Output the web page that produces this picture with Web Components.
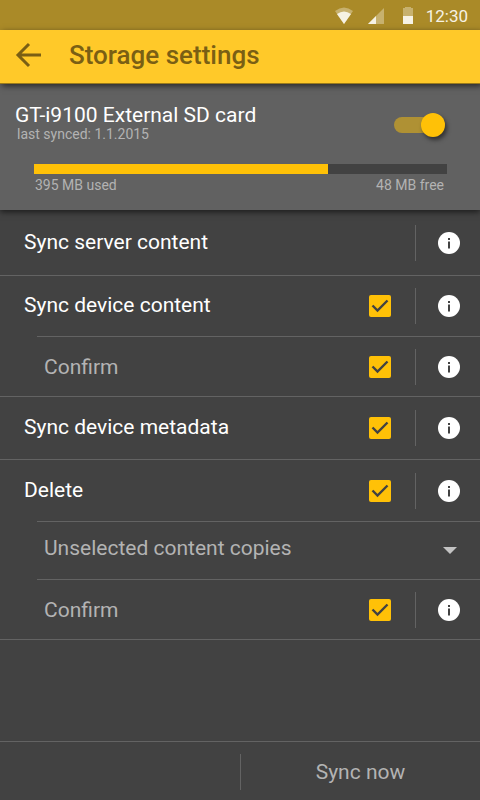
<!DOCTYPE html>
<html lang="en">
<head>
<meta charset="utf-8">
<meta name="viewport" content="width=device-width, initial-scale=1">
<title>Storage settings</title>
<style>
  html, body { height: 100%; margin: 0; }
  body {
    --amber: #ffc107;
    --surface: #424242;
    --raised: #616161;
    --line: #636363;
    --muted: #b3b3b3;
    background: var(--surface);
    color: #fff;
    font-family: Roboto, "Liberation Sans", sans-serif;
  }
</style>
</head>
<body>
<storage-screen></storage-screen>

<script>
const define = (name, html, setup) => {
  const template = document.createElement('template');
  template.innerHTML = html;
  customElements.define(name, class extends HTMLElement {
    constructor() {
      super();
      this.attachShadow({ mode: 'open' }).append(template.content.cloneNode(true));
    }
    connectedCallback() { if (setup) setup(this, this.shadowRoot); }
  });
};

define('status-bar', `
<style>
  :host { display: flex; justify-content: flex-end; align-items: center; height: 30px; padding: 2px 12px 0 0; box-sizing: border-box; background: #aa8a28; color: #f6f2e4; }
  svg { display: block; height: 18px; }
  .wifi { width: 18px; margin-right: 15px; }
  .cell { width: 16px; margin-right: 19px; }
  .battery { width: 10px; margin-right: 13px; }
  time { font-size: 17px; line-height: 24px; }
</style>
<svg class="wifi" viewBox="0 0 18 18" aria-label="Wi-Fi"><path d="M0 4Q9-3 18 4L9 17z" fill="#c7b16e"/><path d="M2 7Q9 2 16 7L9 17z" fill="#f6f2e4"/></svg>
<svg class="cell" viewBox="0 0 16 18" aria-label="Signal"><path d="M16 1v16H0z" fill="#c7b16e"/><path d="M8 9v8H0z" fill="#f6f2e4"/></svg>
<svg class="battery" viewBox="0 0 10 18" aria-label="Battery"><path d="M0 1h2V0h6v1h2v16H0z" fill="#c7b16e"/><path d="M0 9h10v8H0z" fill="#f6f2e4"/></svg>
<time>12:30</time>`);

define('app-header', `
<style>
  :host { display: flex; align-items: center; gap: 27px; height: 54px; padding: 0 14px 3px; box-sizing: border-box; background: #ffc929; border-bottom: 1px solid #9a7a1c; color: #7a5f14; position: relative; z-index: 2; box-shadow: 2px 2px 6px rgba(0,0,0,.6); }
  button { display: block; width: 28px; height: 28px; padding: 0; border: 0; background: none; color: inherit; }
  svg { display: block; }
  h1 { margin: 0; font-size: 26px; line-height: 32px; font-weight: 500; }
</style>
<button aria-label="Back"><svg width="28" height="28" viewBox="0 0 28 28" fill="none" stroke="currentColor" stroke-width="3"><path d="M27 14H4M15 3L4 14l11 11"/></svg></button>
<h1><slot></slot></h1>`);

define('toggle-switch', `
<style>
  :host { display: block; }
  input { appearance: none; display: flex; justify-content: flex-end; align-items: center; width: 51px; height: 16px; margin: 0; border-radius: 8px; background: #af9134; }
  input::before { content: ""; width: 24px; height: 24px; flex: none; border-radius: 50%; background: var(--amber); box-shadow: 2px 3px 4px rgba(0,0,0,.5); }
</style>
<input type="checkbox" role="switch" checked aria-label="Sync this storage">`);

define('storage-card', `
<style>
  :host { display: block; padding: 19px 33px 16px 15px; background: var(--raised); position: relative; z-index: 1; box-shadow: 0 2px 6px rgba(0,0,0,.6); }
  .top { display: flex; justify-content: space-between; align-items: center; }
  toggle-switch { margin: 6px 2px 0 0; }
  h2 { margin: 0; font-size: 21px; line-height: 24px; font-weight: 400; }
  p { margin: 0 0 0 2px; }
  p, label, output { font-size: 14px; color: var(--muted); }
  p { line-height: 14px; }
  label, output { line-height: 18px; }
  .usage { display: grid; grid-template-columns: 1fr auto; row-gap: 2px; margin: 23px 0 0 19px; }
  progress { appearance: none; grid-column: 1 / -1; display: block; width: 100%; height: 10px; border: 0; background: var(--surface); }
  progress::-webkit-progress-bar { background: var(--surface); }
  progress::-webkit-progress-value { background: var(--amber); }
  output { padding-right: 3px; }
  label { padding-left: 1px; }
</style>
<div class="top">
  <div><h2>GT-i9100 External SD card</h2><p>last synced: 1.1.2015</p></div>
  <toggle-switch></toggle-switch>
</div>
<div class="usage">
  <progress id="used" max="413" value="294"></progress>
  <label for="used">395 MB used</label><output>48 MB free</output>
</div>`);

define('setting-row', `
<style>
  :host { display: flex; align-items: center; box-sizing: border-box; height: 60px; padding: 0 20px 0 24px; border-bottom: 1px solid var(--line); }
  :host([tall]) { height: 63px; }
  :host([first]) { height: 66px; }
  :host([sub]) { padding-left: 7px; color: var(--muted); }
  label { flex: 1; font-size: 21px; line-height: 26px; padding-bottom: 2px; }
  :host([sub]) label { padding-bottom: 0; }
  input { appearance: none; width: 22px; height: 22px; margin: 0 24px 0 0; border-radius: 2px; background: var(--amber) }
  .tick { display: grid; }
  .tick > * { grid-area: 1 / 1; }
  .tick svg { pointer-events: none; }
  :host([plain]) .tick { display: none; }
  .info { display: flex; align-items: center; height: 36px; padding: 0 0 0 22px; border: 0; border-left: 1px solid var(--line); background: none; }
  svg { display: block; }
</style>
<label for="box"><slot></slot></label>
<div class="tick"><input type="checkbox" id="box" checked><svg width="22" height="22" viewBox="0 0 22 22" fill="none" stroke="#424242" stroke-width="2.4"><path d="M3.500 10.500L8.500 15.500L18.500 5.500"/></svg></div>
<button class="info" aria-label="Information"><svg width="22" height="22" viewBox="0 0 22 22"><circle cx="11" cy="11" r="11" fill="#fff"/><path d="M10 6h2v2h-2zM10 9.500h2v7h-2z" fill="#424242"/></svg></button>`,
(host, root) => root.querySelector('input').setAttribute('aria-label', host.textContent));

define('select-row', `
<style>
  :host { display: grid; align-items: center; box-sizing: border-box; height: 58px; border-bottom: 1px solid var(--line); color: var(--muted); }
  select, svg { grid-area: 1 / 1; }
  select { appearance: none; width: 100%; height: 26px; padding: 0 48px 0 7px; margin: 0 0 6px; border: 0; background: none; color: inherit; font: 21px/26px Roboto, "Liberation Sans", sans-serif; }
  svg { justify-self: end; margin-right: 23px; pointer-events: none; }
</style>
<select aria-label="Content to delete"><option>Unselected content copies</option></select>
<svg width="14" height="8" viewBox="0 0 14 8"><path d="M0 0h14L7 7z" fill="#c3c3c3"/></svg>`);

define('setting-group', `
<style>
  :host { display: block; border-bottom: 1px solid var(--line); }
  .children { padding-left: 37px; }
  ::slotted(:last-child) { border-bottom: 0; height: 59px; }
  .rule { height: 1px; margin-left: 37px; background: var(--line); }
  ::slotted([slot=head]) { border-bottom: 0; height: 60px; }
  ::slotted([slot=head][tall]) { height: 61px; }
</style>
<div class="head"><slot name="head"></slot></div>
<div class="rule"></div>
<div class="children"><slot></slot></div>`);

define('action-bar', `
<style>
  :host { display: grid; grid-template-columns: 1fr 1fr; align-items: center; height: 59px; padding-top: 1px; box-sizing: border-box; border-top: 1px solid var(--line); }
  button { grid-column: 2; height: 36px; padding: 0; border: 0; border-left: 1px solid var(--line); background: none; color: var(--muted); font: 21px/26px Roboto, "Liberation Sans", sans-serif; }
</style>
<button><slot></slot></button>`);

define('storage-screen', `
<style>
  :host { display: flex; flex-direction: column; min-height: 100vh; }
  main { flex: 1; }
</style>
<status-bar></status-bar>
<app-header>Storage settings</app-header>
<storage-card></storage-card>
<main>
  <setting-row first plain>Sync server content</setting-row>
  <setting-group>
    <setting-row slot="head">Sync device content</setting-row>
    <setting-row sub>Confirm</setting-row>
  </setting-group>
  <setting-row tall>Sync device metadata</setting-row>
  <setting-group>
    <setting-row slot="head" tall>Delete</setting-row>
    <select-row></select-row>
    <setting-row sub>Confirm</setting-row>
  </setting-group>
</main>
<action-bar>Sync now</action-bar>`);
</script>
</body>
</html>
